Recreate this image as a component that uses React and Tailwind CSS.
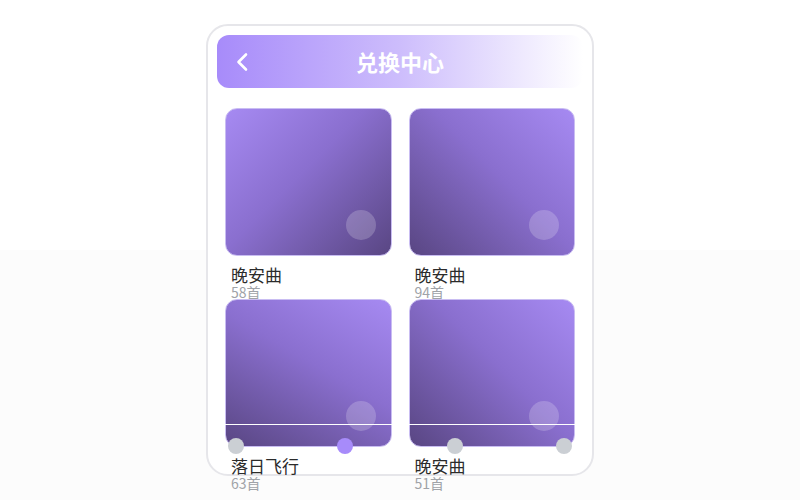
const items = [
  { title: '晚安曲', count: '58首', grad: 'bg-[linear-gradient(135deg,#a68af2_0%,#8a6fcf_45%,#594683_100%)]' },
  { title: '晚安曲', count: '94首', grad: 'bg-[linear-gradient(225deg,#a68af2_0%,#8a6fcf_45%,#594683_100%)]' },
  { title: '落日飞行', count: '63首', grad: 'bg-[linear-gradient(210deg,#a68af2_0%,#8a6fcf_45%,#594683_100%)]' },
  { title: '晚安曲', count: '51首', grad: 'bg-[linear-gradient(225deg,#a68af2_0%,#8a6fcf_45%,#594683_100%)]' },
];

const dots = [false, true, false, false];

function AlbumCard({ item }) {
  return (
    <div className="flex flex-col">
      <div className={`relative h-[150px] rounded-[12px] border border-[#c9bdf2] ${item.grad}`}>
        <div className="absolute bottom-[15px] right-[15px] h-[30px] w-[30px] rounded-full bg-white/20" />
      </div>
      <p className="mt-[9px] pl-[6px] text-[17px] leading-[20px] text-[#2b2b2b]">{item.title}</p>
      <p className="pl-[6px] text-[14px] leading-[14px] text-[#a0a3a8]">{item.count}</p>
    </div>
  );
}

export default function App() {
  return (
    <div
      className="flex h-[500px] justify-center bg-[linear-gradient(to_bottom,#ffffff_50%,#fcfcfc_50%)] pt-[24px]"
      style={{ fontFamily: '"Noto Sans CJK SC", "Noto Sans", sans-serif' }}
    >
      <div className="relative h-[452px] w-[388px] rounded-[22px] border-2 border-[#e6e6ea] bg-white p-[9px]">
        <header className="relative flex h-[53px] items-center justify-center rounded-[12px] bg-[linear-gradient(90deg,#a78bfa_0%,#cdbdfc_50%,#ffffff_100%)]">
          <svg className="absolute left-[18px] top-[17px]" width="14" height="20" viewBox="0 0 14 20" fill="none">
            <polyline points="11,2.5 3.5,10 11,17.5" stroke="white" strokeWidth="2.6" strokeLinecap="round" strokeLinejoin="round" />
          </svg>
          <h1 className="text-[22px] font-bold text-white">兑换中心</h1>
        </header>
        <div className="mt-[20px] grid auto-rows-[191px] grid-cols-2 gap-x-[17px] px-2">
          {items.map((item, i) => (
            <AlbumCard key={i} item={item} />
          ))}
        </div>
        <div className="absolute left-[10px] right-[10px] top-[398px]">
          <div className="h-px bg-white" />
          <div className="mt-[13px] flex justify-between px-[10px]">
            {dots.map((active, i) => (
              <span key={i} className={`h-4 w-4 rounded-full ${active ? 'bg-[#a78bfa]' : 'bg-[#cbcfd4]'}`} />
            ))}
          </div>
        </div>
      </div>
    </div>
  );
}
